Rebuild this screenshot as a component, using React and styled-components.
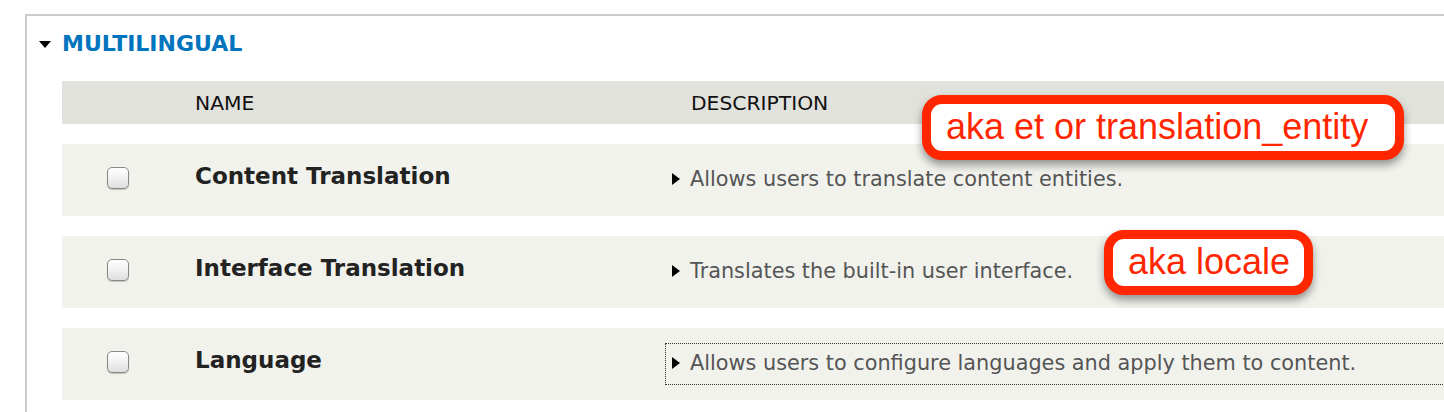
import styled, { createGlobalStyle } from "styled-components";

const GlobalStyle = createGlobalStyle`
  html, body {
    margin: 0;
    padding: 0;
    background: #fff;
    overflow: hidden;
  }
  body {
    font-family: "DejaVu Sans", Verdana, sans-serif;
  }
`;

const modules = [
  {
    name: "Content Translation",
    description: "Allows users to translate content entities.",
  },
  {
    name: "Interface Translation",
    description: "Translates the built-in user interface.",
  },
  {
    name: "Language",
    description: "Allows users to configure languages and apply them to content.",
    focused: true,
  },
];

const notes = [
  { text: "aka et or translation_entity", left: 922, top: 95, width: 482 },
  { text: "aka locale", left: 1104, top: 230, width: 209 },
];

const App = () => {
  return (
    <Page>
      <GlobalStyle />
      <Panel>
        <Summary>
          <ArrowDown />
          <Title>MULTILINGUAL</Title>
        </Summary>
        <Table>
          <HeaderRow>
            <span />
            <HeaderCell>NAME</HeaderCell>
            <HeaderCell $indent>DESCRIPTION</HeaderCell>
          </HeaderRow>
          {modules.map((m) => (
            <Row key={m.name}>
              <CheckCell>
                <Checkbox type="checkbox" aria-label={m.name} />
              </CheckCell>
              <Name>{m.name}</Name>
              <Description $focused={m.focused}>
                <ArrowRight />
                <span>{m.description}</span>
              </Description>
            </Row>
          ))}
        </Table>
      </Panel>
      {notes.map((n) => (
        <Note
          key={n.text}
          style={{ left: n.left, top: n.top, width: n.width }}
        >
          {n.text}
        </Note>
      ))}
    </Page>
  );
};

export default App;

const Page = styled.div`
  position: relative;
  width: 1444px;
  height: 412px;
  overflow: hidden;
  box-sizing: border-box;
  padding: 14px 0 0 25px;
`;

const Panel = styled.div`
  width: 1500px;
  height: 420px;
  border-top: 2px solid #cccccc;
  border-left: 2px solid #cccccc;
`;

const Summary = styled.div`
  display: flex;
  align-items: center;
  gap: 11px;
  padding: 14px 0 0 12px;
  height: 28px;
`;

const ArrowDown = styled.span`
  width: 0;
  height: 0;
  border-left: 6px solid transparent;
  border-right: 6px solid transparent;
  border-top: 7px solid #000;
`;

const Title = styled.span`
  color: #0074bd;
  font-weight: bold;
  font-size: 22px;
  line-height: 28px;
`;

// module table

const Table = styled.div`
  margin: 23px 0 0 35px;
`;

const HeaderRow = styled.div`
  display: grid;
  grid-template-columns: 133px 470px 1fr;
  align-items: center;
  height: 43px;
  background: #e1e2dc;
`;

const HeaderCell = styled.span`
  font-size: 20.3px;
  color: #111;
  padding-left: ${(p) => (p.$indent ? "26px" : "0")};
`;

const Row = styled.div`
  display: grid;
  grid-template-columns: 133px 470px 1fr;
  align-items: center;
  height: 72px;
  margin-top: 20px;
  background: #f2f2ed;
`;

const CheckCell = styled.div`
  display: flex;
  padding-left: 45px;
  margin-bottom: 4px;
`;

const Checkbox = styled.input`
  appearance: none;
  margin: 0;
  width: 22px;
  height: 22px;
  box-sizing: border-box;
  border: 1px solid #888;
  border-radius: 5px;
  background: linear-gradient(#ffffff, #f1f1f1 50%, #dedede);
  box-shadow: 0 1px 1px rgba(0, 0, 0, 0.2);
`;

const Name = styled.span`
  font-size: 23px;
  font-weight: bold;
  color: #222;
  margin-bottom: 8px;
`;

const Description = styled.div`
  display: flex;
  align-items: center;
  gap: 10px;
  height: 42px;
  box-sizing: border-box;
  padding: 0 0 2px 6px;
  border: 1px dotted ${(p) => (p.$focused ? "#333" : "transparent")};
  font-size: 20.8px;
  color: #555;
`;

const ArrowRight = styled.span`
  width: 0;
  height: 0;
  border-top: 6px solid transparent;
  border-bottom: 6px solid transparent;
  border-left: 8px solid #000;
`;

// annotation callouts

const Note = styled.div`
  position: absolute;
  height: 65px;
  box-sizing: border-box;
  padding-left: 15px;
  border: 9px solid #ff2600;
  border-radius: 20px;
  background: #fff;
  box-shadow: 0 5px 8px rgba(0, 0, 0, 0.4);
  color: #ff2600;
  font-family: "Liberation Sans", Arial, sans-serif;
  font-size: 36px;
  line-height: 46px;
  white-space: nowrap;
`;
